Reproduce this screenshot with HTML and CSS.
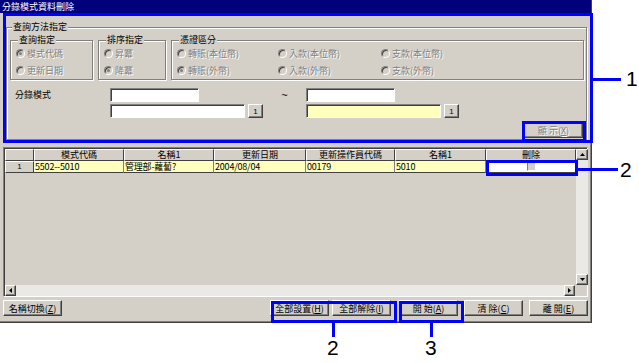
FILE: index.html
```html
<!DOCTYPE html>
<html lang="zh-Hant">
<head>
    <meta charset="UTF-8">
    <title>分錄模式資料刪除</title>
    <link rel="stylesheet" href="styles.css">
</head>
<body>
<div class="page">
    <div class="window">
        <div class="titlebar">分錄模式資料刪除</div>
        <div class="client">
            <fieldset class="group outer">
                <legend>查詢方法指定</legend>
                <div class="options">
                    <fieldset class="group g-query">
                        <legend>查詢指定</legend>
                        <div class="opt off"><span class="radio on"></span>模式代碼</div>
                        <div class="opt off"><span class="radio"></span>更新日期</div>
                    </fieldset>
                    <fieldset class="group g-sort">
                        <legend>排序指定</legend>
                        <div class="opt off"><span class="radio"></span>昇冪</div>
                        <div class="opt off"><span class="radio on"></span>降冪</div>
                    </fieldset>
                    <fieldset class="group g-kind">
                        <legend>憑證區分</legend>
                        <div class="kind-grid">
                            <div class="opt off"><span class="radio"></span>轉賬(本位幣)</div>
                            <div class="opt off"><span class="radio"></span>入款(本位幣)</div>
                            <div class="opt off"><span class="radio"></span>支款(本位幣)</div>
                            <div class="opt off"><span class="radio on"></span>轉賬(外幣)</div>
                            <div class="opt off"><span class="radio"></span>入款(外幣)</div>
                            <div class="opt off"><span class="radio"></span>支款(外幣)</div>
                        </div>
                    </fieldset>
                </div>

                <div class="range">
                    <div class="range-label">分錄模式</div>
                    <div class="range-box">
                        <div class="field short"></div>
                        <div class="field-row">
                            <div class="field long"></div>
                            <div class="btn mini">1</div>
                        </div>
                    </div>
                    <div class="tilde">~</div>
                    <div class="range-box">
                        <div class="field short"></div>
                        <div class="field-row">
                            <div class="field long dither"></div>
                            <div class="btn mini">1</div>
                        </div>
                    </div>
                </div>

                <div class="show-row">
                    <div class="btn wide off">顯 示(<u>X</u>)</div>
                </div>
            </fieldset>

            <div class="grid">
                <div class="grid-main">
                    <div class="table">
                        <div class="hcell"></div>
                        <div class="hcell">模式代碼</div>
                        <div class="hcell">名稱1</div>
                        <div class="hcell">更新日期</div>
                        <div class="hcell">更新操作員代碼</div>
                        <div class="hcell">名稱1</div>
                        <div class="hcell">刪除</div>

                        <div class="hcell rowhead">1</div>
                        <div class="cell">5502--5010</div>
                        <div class="cell">管理部-蘿蔔?</div>
                        <div class="cell">2004/08/04</div>
                        <div class="cell">00179</div>
                        <div class="cell">5010</div>
                        <div class="cell check-cell"><span class="check"></span></div>
                    </div>
                    <div class="vscroll">
                        <div class="sbtn">
                            <svg width="5" height="3" viewBox="0 0 5 3"><path d="M2.5 0L5 3H0z" fill="#000"/></svg>
                        </div>
                        <div class="track"></div>
                        <div class="sbtn">
                            <svg width="5" height="3" viewBox="0 0 5 3"><path d="M0 0H5L2.5 3z" fill="#000"/></svg>
                        </div>
                    </div>
                </div>
                <div class="hscroll">
                    <div class="sbtn">
                        <svg width="3" height="5" viewBox="0 0 3 5"><path d="M3 0V5L0 2.5z" fill="#000"/></svg>
                    </div>
                    <div class="track"></div>
                    <div class="sbtn">
                        <svg width="3" height="5" viewBox="0 0 3 5"><path d="M0 0L3 2.5L0 5z" fill="#000"/></svg>
                    </div>
                    <div class="corner"></div>
                </div>
            </div>

            <div class="buttons">
                <div class="btn wide">名稱切換(<u>Z</u>)</div>
                <div class="btn wide push">全部設置(<u>H</u>)</div>
                <div class="btn wide">全部解除(<u>I</u>)</div>
                <div class="btn wide gap-l">開 始(<u>A</u>)</div>
                <div class="btn wide">清 除(<u>C</u>)</div>
                <div class="btn wide">離 開(<u>E</u>)</div>
            </div>
        </div>
    </div>

    <!-- annotation marks -->
    <div class="mark box-search"></div>
    <div class="mark box-show"></div>
    <div class="mark box-cell"></div>
    <div class="mark box-all"></div>
    <div class="mark box-start"></div>
    <div class="mark line-1"></div>
    <div class="mark line-2"></div>
    <div class="mark line-2b"></div>
    <div class="mark line-3"></div>
    <div class="callout num-1">1</div>
    <div class="callout num-2">2</div>
    <div class="callout num-2b">2</div>
    <div class="callout num-3">3</div>
</div>
</body>
</html>
```

FILE: styles.css
```css
body {
    margin: 0;
    background: #fff;
    font-family: "Noto Sans CJK TC", "Noto Sans", sans-serif;
    font-size: 9px;
    line-height: 11px;
    color: #000;
}
.page {
    position: relative;
    width: 639px;
    height: 363px;
}
.window {
    width: 591px;
    height: 322px;
    background: #d4d0c8;
    border-right: 1px solid #404040;
    border-bottom: 1px solid #404040;
    box-shadow: inset -1px -1px #808080;
}
.titlebar {
    height: 13px;
    line-height: 13px;
    padding-left: 2px;
    background: #00007c;
    color: #fff;
}
.client {
    padding: 9px 3px 0 6px;
}

/* group boxes */
.group {
    margin: 0;
    border: 1px solid #808080;
    box-shadow: inset 1px 1px #fff, 1px 1px #fff;
    min-width: 0;
}
.group legend {
    padding: 0 1px;
    margin-left: 2px;
    line-height: 10px;
    background: #d4d0c8;
}
.outer {
    margin-right: 1px;
    padding: 3px 2px 1px 3px;
}
.options {
    display: flex;
    gap: 5px;
}
.options .group {
    padding: 3px 4px 3px 5px;
    display: flex;
    flex-direction: column;
    gap: 6px;
}
.g-query {
    width: 83px;
    box-sizing: border-box;
}
.g-sort {
    width: 68px;
    box-sizing: border-box;
}
.g-kind {
    flex: 1;
}
.kind-grid {
    display: grid;
    grid-template-columns: 101px 103px 1fr;
    row-gap: 6px;
}
.opt {
    display: flex;
    align-items: center;
    gap: 2px;
    height: 11px;
    white-space: nowrap;
}
.off {
    color: #808080;
    text-shadow: 1px 1px 0 #fff;
}
.radio {
    position: relative;
    width: 7px;
    height: 7px;
    border-radius: 50%;
    border: 1px solid;
    border-color: #808080 #fff #fff #808080;
    box-shadow: inset 1px 1px #404040;
    background: #d4d0c8;
}
.radio.on::after {
    content: "";
    position: absolute;
    left: 2px;
    top: 2px;
    width: 3px;
    height: 3px;
    border-radius: 50%;
    background: #808080;
}

/* range inputs */
.range {
    display: flex;
    margin-top: 8px;
    padding-left: 5px;
}
.range-label {
    width: 95px;
    padding-top: 1px;
}
.range-box {
    display: flex;
    flex-direction: column;
    gap: 2px;
}
.field-row {
    display: flex;
    gap: 3px;
}
.field {
    box-sizing: border-box;
    height: 14px;
    background: #fff;
    border: 1px solid;
    border-color: #808080 #fff #fff #808080;
    box-shadow: inset 1px 1px #404040;
}
.field.short {
    width: 89px;
}
.field.long {
    width: 135px;
}
.dither {
    background: #ffffbe;
}
.tilde {
    width: 43px;
    text-align: center;
    font-family: "Liberation Sans", sans-serif;
    font-size: 11px;
    line-height: 14px;
}
.show-row {
    display: flex;
    justify-content: flex-end;
    margin-top: 4px;
    padding-right: 1px;
}

/* buttons */
.btn {
    box-sizing: border-box;
    display: flex;
    align-items: center;
    justify-content: center;
    height: 16px;
    background: #d4d0c8;
    border: 1px solid;
    border-color: #fff #404040 #404040 #fff;
    box-shadow: inset -1px -1px #808080;
    white-space: nowrap;
}
.btn.mini {
    width: 15px;
    height: 14px;
    font-family: "Liberation Sans", sans-serif;
    font-size: 8px;
}
.btn.wide {
    width: 59px;
}

/* data grid */
.grid {
    margin: 7px 0 0 -3px;
    height: 150px;
    box-sizing: border-box;
    border: 1px solid;
    border-color: #808080 #fff #fff #808080;
    box-shadow: inset 1px 1px #404040;
    display: flex;
    flex-direction: column;
}
.grid-main {
    flex: 1;
    display: flex;
    padding-top: 1px;
    padding-left: 1px;
    min-height: 0;
}
.table {
    flex: 1;
    display: grid;
    grid-template-columns: 29px 90px 90px 92px 89px 91px 90px;
    grid-template-rows: 12px 12px;
    align-content: start;
}
.hcell {
    border: 1px solid;
    border-color: #fff #404040 #404040 #fff;
    text-align: center;
    line-height: 10px;
    overflow: hidden;
    white-space: nowrap;
}
.rowhead {
    line-height: 10px;
    font-family: "Liberation Sans", sans-serif;
    font-size: 8px;
}
.cell {
    background: #ffffbe;
    border-right: 1px solid #808080;
    border-bottom: 1px solid #404040;
    padding-left: 1px;
    line-height: 11px;
    letter-spacing: -0.2px;
    white-space: nowrap;
    overflow: hidden;
}
.check-cell {
    background: #fff;
    display: flex;
    justify-content: center;
    align-items: center;
}
.check {
    width: 7px;
    height: 7px;
    background: #d4d0c8;
    border: 1px solid;
    border-color: #808080 #fff #fff #808080;
}
.vscroll {
    width: 12px;
    display: flex;
    flex-direction: column;
}
.track {
    flex: 1;
    background: #ebe9e5;
}
.sbtn {
    box-sizing: border-box;
    width: 12px;
    height: 11px;
    display: flex;
    align-items: center;
    justify-content: center;
    background: #d4d0c8;
    border: 1px solid;
    border-color: #fff #404040 #404040 #fff;
    box-shadow: inset -1px -1px #808080;
}
.hscroll {
    height: 11px;
    display: flex;
    padding-left: 1px;
}
.hscroll .sbtn {
    width: 11px;
}
.corner {
    width: 12px;
    background: #d4d0c8;
}
.buttons {
    display: flex;
    margin: 3px 0 0 -3px;
}
.buttons .push {
    margin-left: auto;
    margin-right: 3px;
}
.buttons .gap-l {
    margin-left: 8px;
    margin-right: 6px;
}
.buttons .gap-l + .btn {
    margin-right: 6px;
}
.buttons u {
    text-decoration: underline;
}

/* annotations over the screenshot */
.mark {
    position: absolute;
    background: #0000ff;
}
.box-search, .box-show, .box-cell, .box-all, .box-start {
    background: none;
    border: 3px solid #0000ff;
    box-sizing: border-box;
}
.box-search { left: 3px; top: 13px; width: 590px; height: 130px; }
.box-show { left: 522px; top: 121px; width: 64px; height: 21px; }
.box-cell { left: 486px; top: 160px; width: 92px; height: 16px; }
.box-all { left: 271px; top: 301px; width: 126px; height: 22px; }
.box-start { left: 399px; top: 301px; width: 65px; height: 22px; }
.line-1 { left: 593px; top: 78px; width: 28px; height: 3px; }
.line-2 { left: 578px; top: 168px; width: 40px; height: 3px; }
.line-2b { left: 332px; top: 323px; width: 3px; height: 14px; }
.line-3 { left: 430px; top: 323px; width: 3px; height: 14px; }
.callout {
    position: absolute;
    font-family: "Liberation Sans", Arial, sans-serif;
    font-size: 21px;
    line-height: 21px;
    color: #000;
}
.num-1 { left: 626px; top: 68px; }
.num-2 { left: 620px; top: 159px; }
.num-2b { left: 327px; top: 337px; }
.num-3 { left: 425px; top: 337px; }
```
